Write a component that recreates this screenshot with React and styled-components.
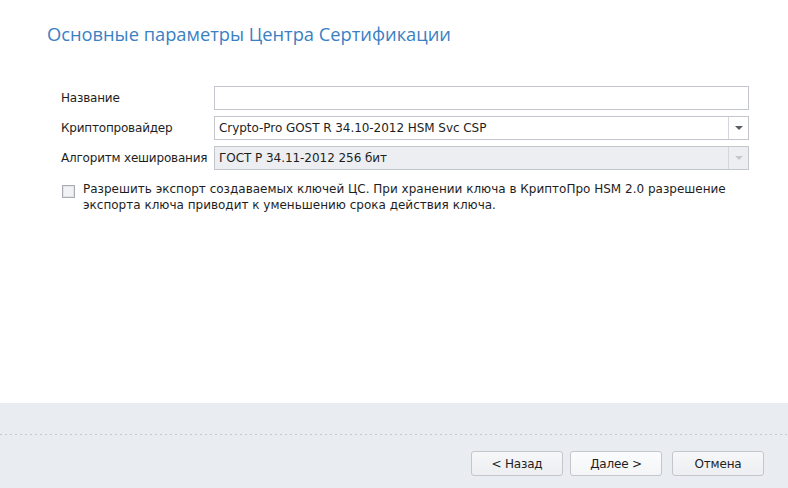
import React from "react";
import styled, { createGlobalStyle, css } from "styled-components";

const uiFont = `"DejaVu Sans", Verdana, sans-serif`;

const GlobalStyle = createGlobalStyle`
  html, body {
    margin: 0;
    padding: 0;
    background: #ffffff;
  }
  body {
    font-family: ${uiFont};
    font-size: 12px;
    color: #1e1e1e;
  }
`;

const Page = styled.div`
  width: 788px;
  height: 488px;
  display: flex;
  flex-direction: column;
  overflow: hidden;
`;

const Content = styled.div`
  height: 403px;
  padding: 22px 39px 0 47px;
  box-sizing: border-box;
`;

const Title = styled.h1`
  margin: 0;
  font-family: "Open Sans", "Noto Sans", sans-serif;
  font-size: 18.3px;
  font-weight: 400;
  color: #3a80c4;
  line-height: 24px;
`;

const Form = styled.div`
  margin-top: 40px;
  padding-left: 14px;
  display: grid;
  grid-template-columns: 153px 1fr;
  row-gap: 6px;
  align-items: center;
`;

const Label = styled.label`
  font-size: 12px;
  letter-spacing: -0.2px;
  color: #1e1e1e;
  white-space: nowrap;
`;

const fieldBox = css`
  height: 24px;
  box-sizing: border-box;
  border: 1px solid #c3c7cd;
  background: ${props => (props.disabled ? "#eceef1" : "#ffffff")};
`;

const TextInput = styled.div`
  ${fieldBox}
`;

const Combo = styled.div`
  ${fieldBox}
  display: flex;
  align-items: stretch;
`;

const ComboValue = styled.div`
  flex: 1;
  padding-left: 4px;
  display: flex;
  align-items: center;
  font-size: 12px;
  letter-spacing: -0.05px;
  color: #1e1e1e;
  white-space: nowrap;
`;

const ComboArrow = styled.div`
  width: 19px;
  border-left: 1px solid #d3d6db;
  display: flex;
  align-items: center;
  justify-content: center;

  &::after {
    content: "";
    border-left: 4px solid transparent;
    border-right: 4px solid transparent;
    border-top: 4px solid ${props => (props.disabled ? "#c5c8cd" : "#5a5d62")};
  }
`;

const CheckRow = styled.div`
  margin-top: 11px;
  padding-left: 15px;
  display: flex;
  align-items: flex-start;
  gap: 8px;
`;

const CheckBox = styled.span`
  flex: none;
  margin-top: 4px;
  width: 13px;
  height: 13px;
  box-sizing: border-box;
  border: 1px solid #a9adb3;
  background: #f1f2f4;
  box-shadow: inset 0 0 0 1px #e1e3e6;
`;

const CheckText = styled.div`
  font-size: 12px;
  line-height: 16px;
  color: #1e1e1e;
`;

const Footer = styled.div`
  flex: 1;
  background: #e9ecf0;
  display: flex;
  flex-direction: column;
`;

const Dotted = styled.div`
  margin-top: 31px;
  height: 1px;
  background-image: linear-gradient(to right, #c6cad0 50%, transparent 50%);
  background-size: 5px 1px;
`;

const Actions = styled.div`
  margin-top: 16px;
  padding-right: 24px;
  display: flex;
  justify-content: flex-end;
`;

const Button = styled.button`
  width: 92px;
  height: 25px;
  margin-left: ${props => props.gap || 0}px;
  padding: 0;
  border: 1px solid #c3c7cd;
  border-radius: 3px;
  background: ${props =>
    props.primary
      ? "linear-gradient(#fbfcfd, #f3f5f7)"
      : "linear-gradient(#f6f7f9, #eceef1)"};
  font-family: ${uiFont};
  font-size: 12px;
  letter-spacing: -0.2px;
  color: #1e1e1e;
`;

const App = () => {
  return (
    <Page>
      <GlobalStyle />
      <Content>
        <Title>Основные параметры Центра Сертификации</Title>
        <Form>
          <Label>Название</Label>
          <TextInput />
          <Label>Криптопровайдер</Label>
          <Combo>
            <ComboValue>Crypto-Pro GOST R 34.10-2012 HSM Svc CSP</ComboValue>
            <ComboArrow />
          </Combo>
          <Label>Алгоритм хеширования</Label>
          <Combo disabled>
            <ComboValue>ГОСТ Р 34.11-2012 256 бит</ComboValue>
            <ComboArrow disabled />
          </Combo>
        </Form>
        <CheckRow>
          <CheckBox />
          <CheckText>
            Разрешить экспорт создаваемых ключей ЦС. При хранении ключа в КриптоПро HSM 2.0 разрешение
            <br />
            экспорта ключа приводит к уменьшению срока действия ключа.
          </CheckText>
        </CheckRow>
      </Content>
      <Footer>
        <Dotted />
        <Actions>
          <Button>&lt; Назад</Button>
          <Button primary gap={7}>Далее &gt;</Button>
          <Button gap={10}>Отмена</Button>
        </Actions>
      </Footer>
    </Page>
  );
};

export default App;
